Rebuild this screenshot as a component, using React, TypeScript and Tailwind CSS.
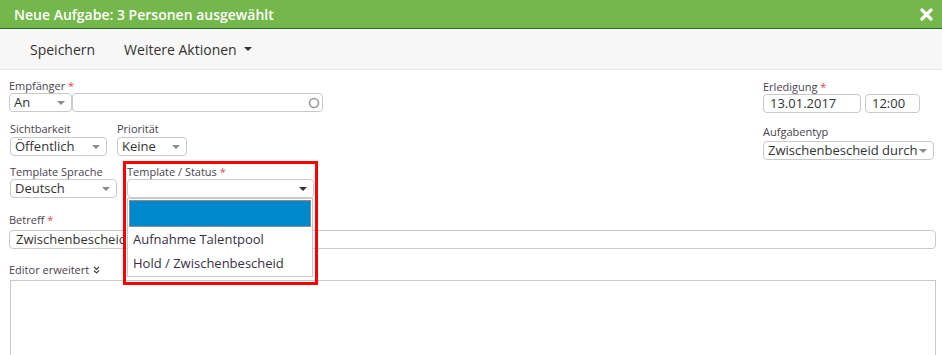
import React from 'react';

const font = { fontFamily: '"Open Sans", "Noto Sans", sans-serif' };

const Star = () => <span className="text-[#e2474f]"> *</span>;

const Label: React.FC<{ text: string; req?: boolean }> = ({ text, req }) => (
  <div className="text-[11px] leading-[15px] text-[#4a3f4f] whitespace-nowrap">
    {text}
    {req && <Star />}
  </div>
);

const Caret: React.FC<{ dark?: boolean }> = ({ dark }) => (
  <svg width="8" height="4" viewBox="0 0 8 4" className="shrink-0">
    <path d="M0 0H8L4 4Z" fill={dark ? '#333' : '#8a8a8a'} />
  </svg>
);

const Select: React.FC<{ value: string; w: string; dark?: boolean }> = ({ value, w, dark }) => (
  <div
    className={`${w} h-[19px] border border-[#c9c9c9] rounded-[4px] bg-white flex items-center justify-between pl-[4px] pr-[6px] text-[13px] text-[#333] overflow-hidden`}
  >
    <span className="truncate leading-[17px]">{value}</span>
    <Caret dark={dark} />
  </div>
);

const Input: React.FC<{ value?: string; w: string; children?: React.ReactNode }> = ({ value, w, children }) => (
  <div
    className={`${w} h-[19px] border border-[#c9c9c9] rounded-[4px] bg-white flex items-center justify-between pl-[6px] pr-[2px] text-[13px] text-[#333]`}
  >
    <span className="leading-[17px] whitespace-nowrap">{value}</span>
    {children}
  </div>
);

const App: React.FC = () => {
  return (
    <div className="w-[942px] h-[355px] bg-white overflow-hidden" style={font}>
      {/* Header */}
      <header className="h-[29px] bg-[#74b84b] border-b border-[#2f6b1e] flex items-center justify-between pl-[14px] pr-[9px]">
        <h1 className="text-[14px] font-semibold text-white">Neue Aufgabe: 3 Personen ausgewählt</h1>
        <svg width="13" height="13" viewBox="0 0 13 13">
          <path d="M2 2L11 11M11 2L2 11" stroke="white" strokeWidth="3.2" strokeLinecap="round" />
        </svg>
      </header>

      {/* Toolbar */}
      <nav className="h-[41px] bg-[#f7f7f7] border-b border-[#e3e3e3] flex items-center pl-[30px] text-[14px] text-[#333]">
        <span>Speichern</span>
        <span className="ml-[29px] flex items-center gap-[7px]">
          Weitere Aktionen
          <Caret dark />
        </span>
      </nav>

      {/* Form */}
      <main className="pl-[9px] pr-[6px] pt-[8px]">
        <div className="flex justify-between">
          <div className="flex flex-col">
            <Label text="Empfänger" req />
            <div className="flex">
              <Select value="An" w="w-[63px]" />
              <Input w="w-[251px]">
                <svg width="12" height="12" viewBox="0 0 12 12">
                  <circle cx="6" cy="6" r="4.5" fill="none" stroke="#9a9a9a" strokeWidth="1.6" />
                </svg>
              </Input>
            </div>

            <div className="flex gap-[10px] mt-[9px] pl-[1px]">
              <div>
                <Label text="Sichtbarkeit" />
                <div className="mt-[1px]">
                  <Select value="Öffentlich" w="w-[97px]" />
                </div>
              </div>
              <div>
                <Label text="Priorität" />
                <div className="mt-[1px]">
                  <Select value="Keine" w="w-[70px]" />
                </div>
              </div>
            </div>

            <div className="flex gap-[10px] mt-[8px] pl-[1px]">
              <div>
                <Label text="Template Sprache" />
                <Select value="Deutsch" w="w-[107px]" />
              </div>
              <div className="relative">
                <Label text="Template / Status" req />
                <Select value="" w="w-[187px]" dark />
                {/* open dropdown */}
                <div className="absolute left-0 top-[34px] w-[186px] bg-white border border-[#c9c9c9] p-[1px] z-10 text-[13px] text-[#3a2f45]">
                  <div className="h-[27px] bg-[#0088cc] border border-[#8a8a8a]" />
                  <div className="h-[24px] leading-[24px] pl-[4px]">Aufnahme Talentpool</div>
                  <div className="h-[24px] leading-[24px] pl-[4px]">Hold / Zwischenbescheid</div>
                </div>
                {/* highlight frame */}
                <div className="absolute left-[-4px] top-[-3px] w-[195px] h-[124px] border-[3px] border-[#ff0000] z-20 pointer-events-none" />
              </div>
            </div>
          </div>

          <div className="flex flex-col w-[172px] mr-[1px] pt-[1px]">
            <Label text="Erledigung" req />
            <div className="flex gap-[4px]">
              <Input value="13.01.2017" w="w-[98px]" />
              <Input value="12:00" w="w-[55px]" />
            </div>
            <div className="mt-[11px]">
              <Label text="Aufgabentyp" />
              <div className="mt-[2px]">
                <Select value="Zwischenbescheid durch" w="w-[171px]" />
              </div>
            </div>
          </div>
        </div>

        <div className="mt-[14px]">
          <Label text="Betreff" req />
          <div className="mt-[3px]">
            <Input value="Zwischenbescheid durch Talentpool" w="w-full" />
          </div>
        </div>

        <div className="mt-[13px]">
          <div className="text-[11px] leading-[15px] text-[#4a3f4f] flex items-center gap-[4px]">
            Editor erweitert
            <svg width="7" height="8" viewBox="0 0 7 8">
              <path d="M1 1L3.5 3.5L6 1M1 4.5L3.5 7L6 4.5" fill="none" stroke="#444" strokeWidth="1.2" />
            </svg>
          </div>
          <div className="mt-[3px] ml-[1px] h-[80px] border border-[#c9c9c9] bg-white" />
        </div>
      </main>
    </div>
  );
};

export default App;
